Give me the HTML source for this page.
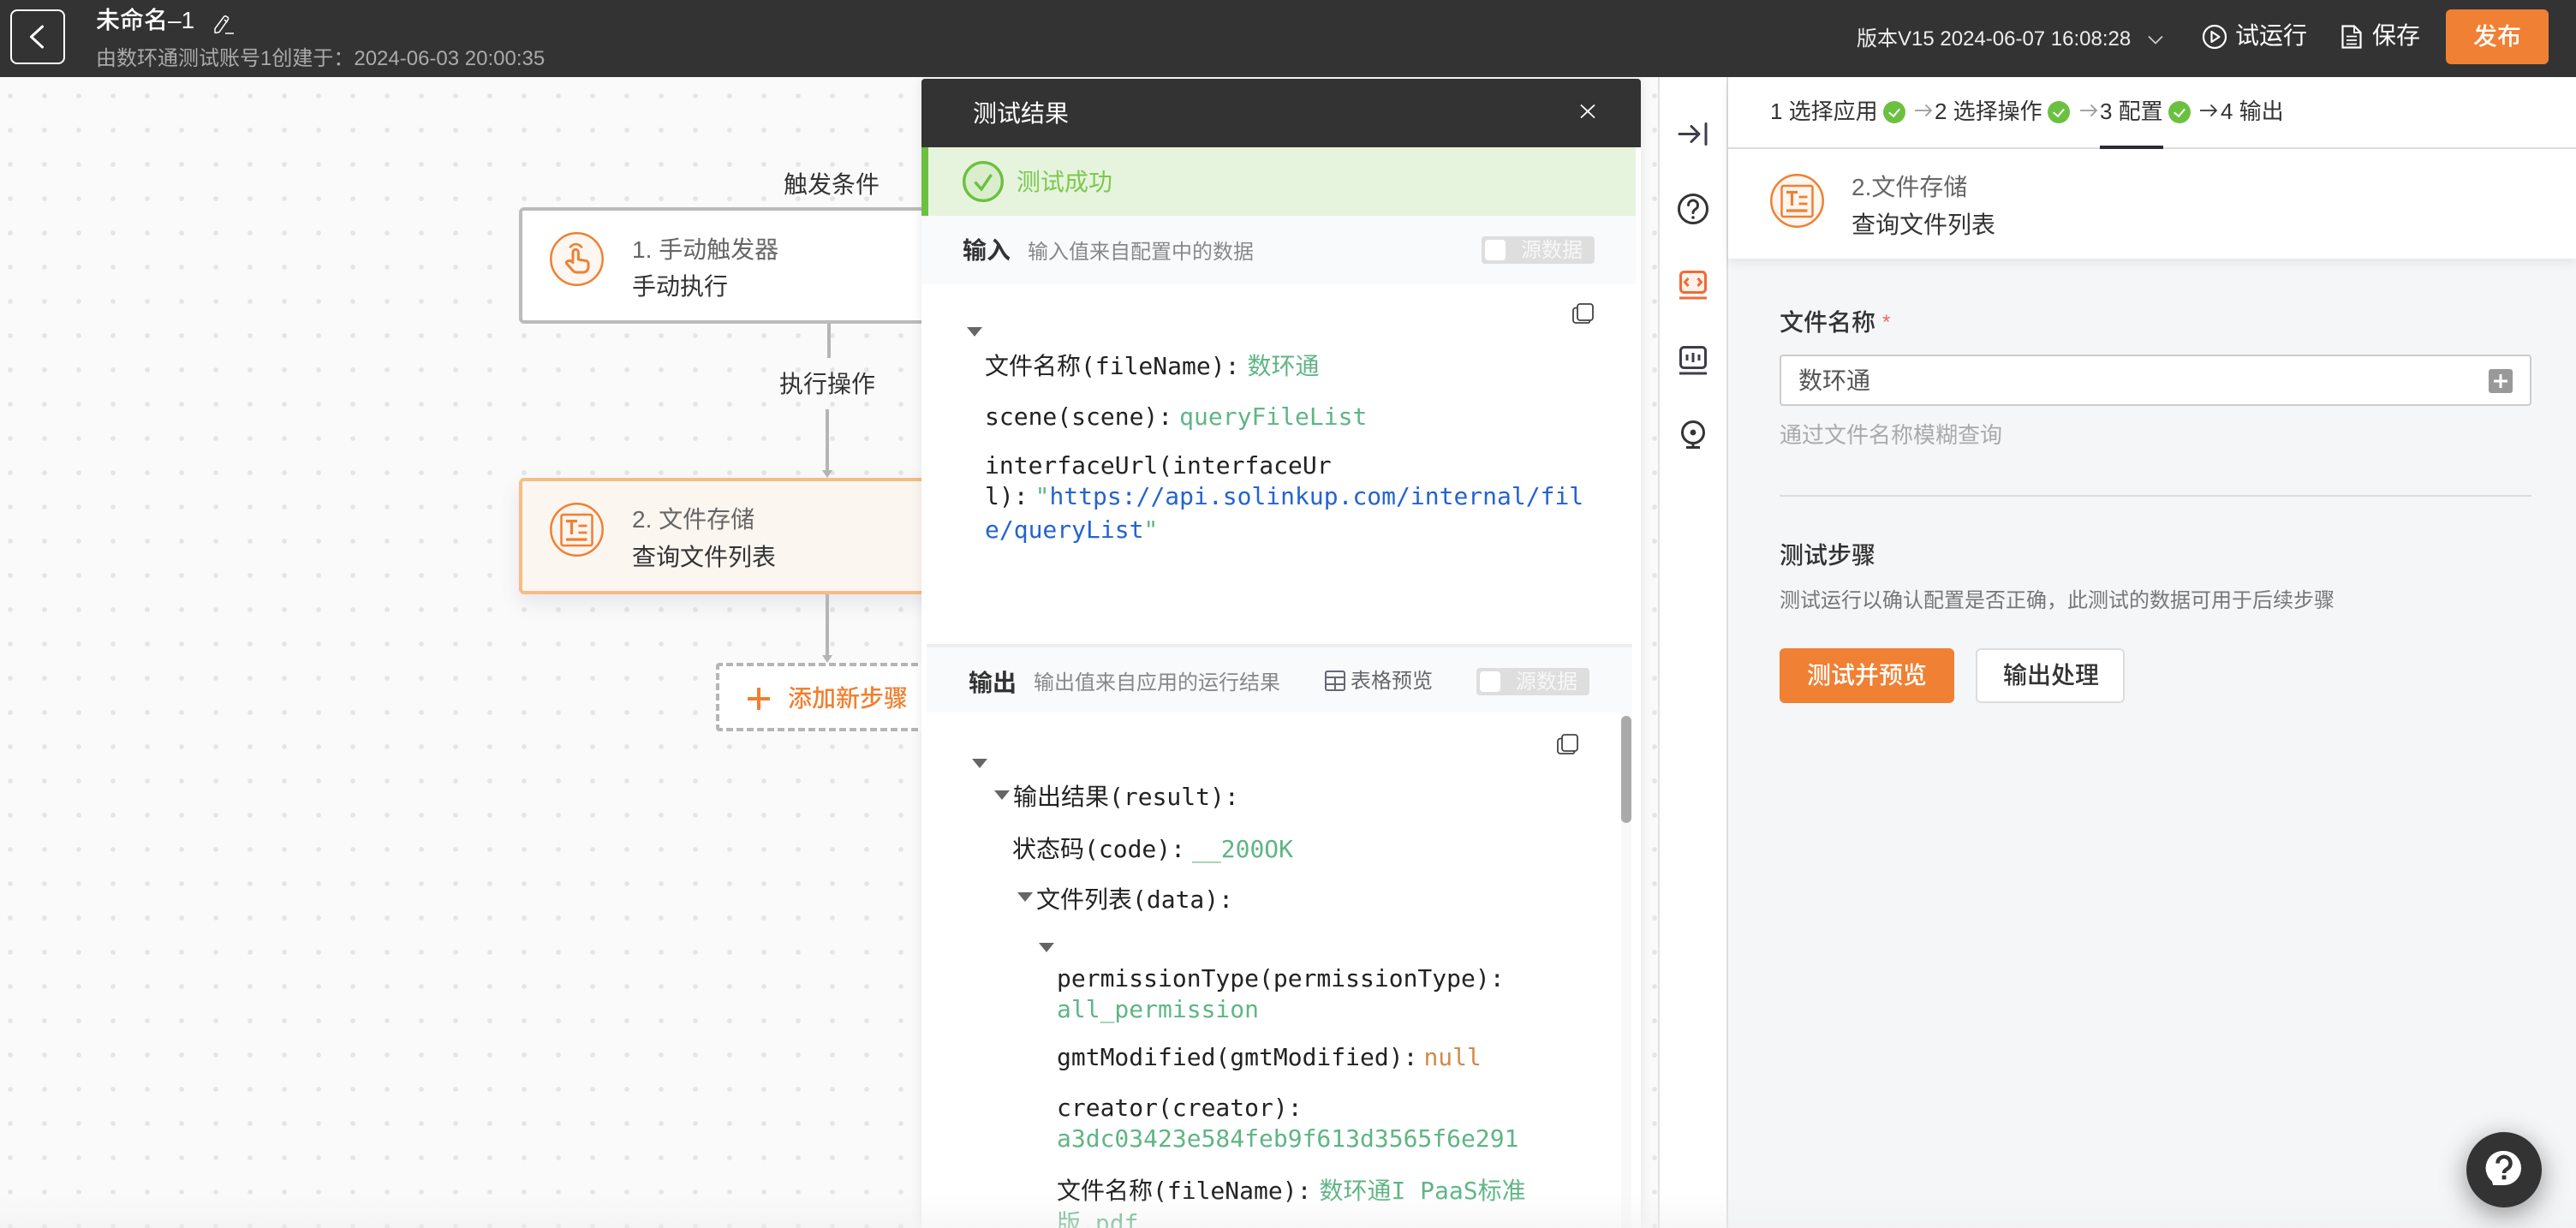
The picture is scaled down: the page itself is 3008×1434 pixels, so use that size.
<!DOCTYPE html>
<html lang="zh-CN">
<head>
<meta charset="utf-8">
<title>未命名-1</title>
<style>
html,body{margin:0;padding:0;width:3008px;height:1434px;overflow:hidden;background:#fafafa}
body{position:relative;font-family:"Liberation Sans","Noto Sans CJK SC",sans-serif;color:#333}
.a{position:absolute}
.t{position:absolute;white-space:pre;line-height:40px;height:40px;font-size:28px}
.m{font-family:"DejaVu Sans Mono","Noto Sans CJK SC",monospace;color:#222}
.g{color:#5fb585}
.b{color:#2463d1}
.o{color:#d08a4c}
svg{position:absolute;overflow:visible}
.canvas{left:0;top:90px;width:3008px;height:1344px;background-color:#fafafa;
background-image:radial-gradient(circle at 12px 22px,#e5e5e5 0,#e5e5e5 2.5px,rgba(229,229,229,0) 3.2px);background-size:40px 40px}
.tri{position:absolute;width:0;height:0;border-left:9px solid transparent;border-right:9px solid transparent;border-top:11px solid #666}
.check{position:absolute;width:26px;height:26px;border-radius:50%;background:#6cc040;top:118px}
.check:after{content:"";position:absolute;left:9px;top:6px;width:6px;height:10px;border:solid #fff;border-width:0 2px 2px 0;transform:rotate(40deg)}
.toggle{position:absolute;width:132px;height:32px;background:#dedede;border-radius:4px}
.toggle i{position:absolute;left:4px;top:4px;width:24px;height:24px;background:#fff;border-radius:4px}
.toggle span{position:absolute;left:46px;top:-3px;line-height:40px;font-size:24px;color:#f7f7f7;white-space:pre}
</style>
</head>
<body>
<div class="a canvas"></div>

<!-- flow -->
<div class="t" style="left:915px;top:196px">触发条件</div>
<div class="a" style="left:606px;top:242px;width:600px;height:136px;box-sizing:border-box;border:4px solid #bbb;border-radius:6px;background:#fff"></div>
<svg style="left:642px;top:271px" width="63" height="63" viewBox="0 0 63 63" fill="none" stroke="#f08030">
<circle cx="31.5" cy="31.5" r="30.2" fill="#fdf6f1" stroke-width="2.5"/>
<path d="M24 17.5a8 8 0 0 1 13 0" stroke-width="2.6" stroke-linecap="round"/>
<path d="M27 33V23.5a3.2 3.2 0 0 1 6.4 0V32l8.6 1.5a3.2 3.2 0 0 1 3 3.2V41a6 6 0 0 1-6 6H31a5 5 0 0 1-3.8-1.8L19.800 37c-1.700-2.200 2.500-6 7.200-1.500" stroke-width="3" stroke-linejoin="round" stroke-linecap="round"/>
</svg>
<div class="t" style="left:738px;top:272px;color:#666">1. 手动触发器</div>
<div class="t" style="left:738px;top:315px">手动执行</div>

<div class="a" style="left:966px;top:378px;width:4px;height:40px;background:#b5b5b5"></div>
<div class="t" style="left:910px;top:429px">执行操作</div>
<div class="a" style="left:964px;top:478px;width:4px;height:76px;background:#b5b5b5"></div>
<div class="a" style="left:960px;top:549px;width:0;height:0;border-left:6px solid transparent;border-right:6px solid transparent;border-top:9px solid #b5b5b5"></div>

<div class="a" style="left:606px;top:558px;width:600px;height:136px;box-sizing:border-box;border:4px solid #f5bd85;border-radius:6px;background:#fcf6f1;box-shadow:0 10px 24px rgba(90,90,120,.12)"></div>
<svg style="left:642px;top:587px" width="63" height="63" viewBox="0 0 63 63" fill="none" stroke="#f08030">
<circle cx="31.5" cy="31.5" r="30.2" stroke-width="2.500"/>
<rect x="13.5" y="14" width="36" height="36" rx="2" stroke-width="2.500"/>
<path d="M19 21.500H32M25.500 21.500V37" stroke-width="3.200"/>
<path d="M33.500 27H43.500M33.500 35H43.500" stroke-width="2.800"/>
<path d="M19 43H43.500" stroke-width="3.200"/>
</svg>
<div class="t" style="left:738px;top:587px;color:#666">2. 文件存储</div>
<div class="t" style="left:738px;top:631px">查询文件列表</div>

<div class="a" style="left:964px;top:694px;width:4px;height:72px;background:#b5b5b5"></div>
<div class="a" style="left:960px;top:765px;width:0;height:0;border-left:6px solid transparent;border-right:6px solid transparent;border-top:9px solid #b5b5b5"></div>
<div class="a" style="left:836px;top:774px;width:260px;height:80px;box-sizing:border-box;border:4px dashed #b5b5b5;border-radius:4px;background:#fff"></div>
<svg style="left:873px;top:803px" width="26" height="26" fill="none" stroke="#f08030" stroke-width="4"><path d="M0 13H26M13 0V26"/></svg>
<div class="t" style="left:920px;top:796px;color:#f08030;font-weight:500">添加新步骤</div>

<!-- test result panel -->
<div class="a" style="left:1076px;top:92px;width:840px;height:1342px;background:#fff;box-shadow:0 0 14px rgba(0,0,0,.09);border-radius:4px 4px 0 0"></div>
<div class="a" style="left:1076px;top:92px;width:840px;height:80px;background:#333;border-radius:4px 4px 0 0"></div>
<div class="t" style="left:1136px;top:113px;color:#fff">测试结果</div>
<svg style="left:1845px;top:122px" width="18" height="16" fill="none" stroke="#fff" stroke-width="1.800"><path d="M1 .5 17 15.500M17 .5 1 15.500"/></svg>

<div class="a" style="left:1076px;top:172px;width:834px;height:80px;background:#e6f4dd"></div>
<div class="a" style="left:1076px;top:172px;width:8px;height:80px;background:#6cc040"></div>
<svg style="left:1124px;top:188px" width="48" height="48" fill="none">
<circle cx="24" cy="24" r="22.300" fill="#daeecd" stroke="#6cc040" stroke-width="3.400"/>
<path d="M14.500 24.500 22 33 33.500 16" stroke="#6cc040" stroke-width="3.400"/>
</svg>
<div class="t" style="left:1187px;top:193px;color:#7cc850">测试成功</div>

<div class="a" style="left:1076px;top:252px;width:834px;height:80px;background:#f9fafc"></div>
<div class="t" style="left:1124px;top:273px;font-weight:700">输入</div>
<div class="t" style="left:1200px;top:275px;font-size:24px;color:#888">输入值来自配置中的数据</div>
<div class="toggle" style="left:1730px;top:276px"><i></i><span>源数据</span></div>

<svg style="left:1836px;top:354px" width="25" height="24" fill="none" stroke="#444" stroke-width="1.800">
<rect x="6" y="1" width="18" height="19" rx="3"/><path d="M5.500 5.500H4a3 3 0 0 0-3 3V20a3 3 0 0 0 3 3h15a3 3 0 0 0 1.500-2.500"/>
</svg>
<div class="tri" style="left:1129px;top:382px"></div>
<div class="t m" style="left:1150px;top:408px">文件名称(fileName):<span class="g" style="margin-left:9px">数环通</span></div>
<div class="t m" style="left:1150px;top:467px">scene(scene):<span class="g" style="margin-left:8px">queryFileList</span></div>
<div class="t m" style="left:1150px;top:524px">interfaceUrl(interfaceUr</div>
<div class="t m" style="left:1150px;top:560px">l):<span class="g" style="margin-left:8px">"</span><span class="b">https://api.solinkup.com/internal/fil</span></div>
<div class="t m" style="left:1150px;top:599px"><span class="b">e/queryList</span><span class="g">"</span></div>

<div class="a" style="left:1082px;top:752px;width:824px;height:4px;background:#eee"></div>
<div class="a" style="left:1082px;top:756px;width:824px;height:76px;background:#f9fafc"></div>
<div class="t" style="left:1131px;top:778px;font-weight:700">输出</div>
<div class="t" style="left:1207px;top:778px;font-size:24px;color:#888">输出值来自应用的运行结果</div>
<svg style="left:1547px;top:783px" width="24" height="24" fill="none" stroke="#667" stroke-width="2"><rect x="1" y="1" width="22" height="22" rx="2"/><path d="M1 8H23M1 16H23M12 8V23"/></svg>
<div class="t" style="left:1577px;top:776px;font-size:24px;color:#666">表格预览</div>
<div class="toggle" style="left:1724px;top:780px"><i></i><span>源数据</span></div>

<div class="a" style="left:1893px;top:832px;width:12px;height:602px;background:#f9f9f9"></div>
<div class="a" style="left:1893px;top:836px;width:12px;height:125px;background:#aaa;border-radius:6px"></div>
<svg style="left:1818px;top:857px" width="25" height="24" fill="none" stroke="#444" stroke-width="1.800">
<rect x="6" y="1" width="18" height="19" rx="3"/><path d="M5.500 5.500H4a3 3 0 0 0-3 3V20a3 3 0 0 0 3 3h15a3 3 0 0 0 1.500-2.500"/>
</svg>
<div class="tri" style="left:1135px;top:886px"></div>
<div class="tri" style="left:1161px;top:923px"></div>
<div class="t m" style="left:1183px;top:911px">输出结果(result):</div>
<div class="t m" style="left:1182px;top:972px">状态码(code):<span class="g" style="margin-left:8px">__200OK</span></div>
<div class="tri" style="left:1188px;top:1042px"></div>
<div class="t m" style="left:1210px;top:1031px">文件列表(data):</div>
<div class="tri" style="left:1213px;top:1101px"></div>
<div class="t m" style="left:1234px;top:1123px">permissionType(permissionType):</div>
<div class="t m g" style="left:1234px;top:1159px;color:#5fb585">all_permission</div>
<div class="t m" style="left:1234px;top:1215px">gmtModified(gmtModified):<span class="o" style="margin-left:7px">null</span></div>
<div class="t m" style="left:1234px;top:1274px">creator(creator):</div>
<div class="t m g" style="left:1234px;top:1310px;color:#5fb585">a3dc03423e584feb9f613d3565f6e291</div>
<div class="t m" style="left:1234px;top:1371px">文件名称(fileName):<span class="g" style="margin-left:9px">数环通I PaaS标准</span></div>
<div class="t m g" style="left:1234px;top:1409px;color:#5fb585">版.pdf</div>

<!-- sidebar -->
<div class="a" style="left:1936px;top:90px;width:82px;height:1344px;background:#fff;border-left:2px solid #e2e2e2;border-right:2px solid #ddd;box-sizing:border-box"></div>
<svg style="left:1960px;top:143px" width="34" height="27" fill="none" stroke="#3d3d4d" stroke-width="3" stroke-linecap="round" stroke-linejoin="round"><path d="M1 13.500H23M15 4.500 24 13.500 15 22.500"/><path d="M32 1.500V25.500" /></svg>
<svg style="left:1959px;top:226px" width="36" height="36" fill="none" stroke="#333" stroke-width="3"><circle cx="18" cy="18" r="16.500"/><path d="M12.500 13.500a5.500 5.500 0 1 1 8.500 4.600c-2 1.300-3 2.300-3 4.400" stroke-linecap="round"/><circle cx="18" cy="28" r="1.800" fill="#333" stroke="none"/></svg>
<svg style="left:1961px;top:316px" width="32" height="34" fill="none" stroke="#f06a35" stroke-width="3"><rect x="1.500" y="1.500" width="29" height="24" rx="4" fill="#fdf1ea"/><path d="M10.500 9 6.500 13.500 10.500 18M21.500 9 25.500 13.500 21.500 18" stroke-width="3"/><path d="M0 32H32"/></svg>
<svg style="left:1961px;top:404px" width="32" height="34" fill="none" stroke="#3d3d4d" stroke-width="3"><rect x="1.500" y="1.500" width="29" height="24" rx="4"/><path d="M9 10V17M16 8V19M23 10V17"/><path d="M0 32H32"/></svg>
<svg style="left:1963px;top:491px" width="28" height="33" fill="none" stroke="#333" stroke-width="3"><circle cx="14" cy="14" r="12.500"/><circle cx="14" cy="14" r="3.400" fill="#333" stroke="none"/><path d="M14 26V31M6 31.500H22"/></svg>

<!-- right panel -->
<div class="a" style="left:2018px;top:90px;width:990px;height:1344px;background:#f5f6f8"></div>
<div class="a" style="left:2018px;top:90px;width:990px;height:212px;background:#fff;box-shadow:0 5px 12px rgba(0,0,0,.07)"></div>
<div class="a" style="left:2018px;top:172px;width:990px;height:2px;background:#ddd"></div>
<div class="a" style="left:2452px;top:170px;width:74px;height:4px;background:#2a2a3a"></div>
<div class="t" style="left:2067px;top:110px;font-size:26px">1 选择应用</div>
<div class="check" style="left:2199px"></div>
<svg style="left:2236px;top:122px" width="20" height="14" fill="none" stroke="#999" stroke-width="1.700"><path d="M0 7H19M12.500 .5 19 7 12.500 13.500"/></svg>
<div class="t" style="left:2259px;top:110px;font-size:26px">2 选择操作</div>
<div class="check" style="left:2391px"></div>
<svg style="left:2429px;top:122px" width="20" height="14" fill="none" stroke="#999" stroke-width="1.700"><path d="M0 7H19M12.500 .5 19 7 12.500 13.500"/></svg>
<div class="t" style="left:2452px;top:110px;font-size:26px">3 配置</div>
<div class="check" style="left:2532px"></div>
<svg style="left:2569px;top:122px" width="20" height="14" fill="none" stroke="#333" stroke-width="1.700"><path d="M0 7H19M12.500 .5 19 7 12.500 13.500"/></svg>
<div class="t" style="left:2593px;top:110px;font-size:26px">4 输出</div>

<svg style="left:2067px;top:203px" width="63" height="63" viewBox="0 0 63 63" fill="none" stroke="#f08030">
<circle cx="31.500" cy="31.500" r="30.200" fill="#fdf6f1" stroke-width="2.500"/>
<rect x="13.500" y="14" width="36" height="36" rx="2" stroke-width="2.500"/>
<path d="M19 21.500H32M25.500 21.500V37" stroke-width="3.200"/>
<path d="M33.500 27H43.500M33.500 35H43.500" stroke-width="2.800"/>
<path d="M19 43H43.500" stroke-width="3.200"/>
</svg>
<div class="t" style="left:2162px;top:199px;color:#666">2.文件存储</div>
<div class="t" style="left:2162px;top:243px">查询文件列表</div>

<div class="t" style="left:2078px;top:357px;font-weight:500">文件名称</div>
<div class="t" style="left:2198px;top:357px;font-size:24px;color:#e66">*</div>
<div class="a" style="left:2078px;top:414px;width:878px;height:60px;box-sizing:border-box;background:#fff;border:2px solid #ccc;border-radius:4px"></div>
<div class="t" style="left:2100px;top:425px;color:#555">数环通</div>
<div class="a" style="left:2906px;top:431px;width:28px;height:28px;background:#999;border-radius:3px"></div>
<svg style="left:2906px;top:431px" width="28" height="28" fill="none" stroke="#fff" stroke-width="3"><path d="M6 14H22M14 6V22"/></svg>
<div class="t" style="left:2078px;top:488px;font-size:26px;color:#aaa">通过文件名称模糊查询</div>
<div class="a" style="left:2078px;top:578px;width:878px;height:2px;background:#ddd"></div>
<div class="t" style="left:2078px;top:629px;font-weight:500">测试步骤</div>
<div class="t" style="left:2078px;top:682px;font-size:24px;color:#777">测试运行以确认配置是否正确，此测试的数据可用于后续步骤</div>
<div class="a" style="left:2078px;top:757px;width:204px;height:64px;background:#f08033;border-radius:6px"></div>
<div class="t" style="left:2110px;top:769px;color:#fff;font-weight:500">测试并预览</div>
<div class="a" style="left:2307px;top:757px;width:174px;height:64px;box-sizing:border-box;background:#fff;border:2px solid #ddd;border-radius:6px"></div>
<div class="t" style="left:2339px;top:769px;font-weight:500">输出处理</div>

<!-- page bottom fade -->
<div class="a" style="left:0;top:1394px;width:3008px;height:40px;background:linear-gradient(rgba(238,238,238,0),rgba(238,238,238,.45))"></div>

<!-- help -->
<div class="a" style="left:2880px;top:1322px;width:88px;height:88px;border-radius:50%;background:#333;box-shadow:0 8px 32px rgba(0,0,0,.42)"></div>
<svg style="left:2904px;top:1344px" width="40" height="42" fill="none">
<path d="M20 0a20 20 0 0 1 0 40H7l-1-4.500A20 20 0 0 1 20 0Z" fill="#fff"/>
<path d="M12.500 14.500a7.500 7.500 0 1 1 11.500 6.200c-2.500 1.700-4 2.800-4 5.300" stroke="#333" stroke-width="4.500"/>
<rect x="17.600" y="28.500" width="4.800" height="4.800" fill="#333"/>
</svg>

<!-- header -->
<div class="a" style="left:0;top:0;width:3008px;height:90px;background:#333"></div>
<div class="a" style="left:12px;top:11px;width:64px;height:64px;box-sizing:border-box;border:2px solid #fff;border-radius:8px"></div>
<svg style="left:34px;top:29px" width="18" height="28" fill="none" stroke="#fff" stroke-width="3" stroke-linecap="round" stroke-linejoin="round"><path d="M15.500 2 2.500 14 15.500 26"/></svg>
<div class="t" style="left:112px;top:4px;color:#fff;font-weight:500">未命名–1</div>
<svg style="left:250px;top:18px" width="23" height="23" fill="none" stroke="#fff" stroke-width="1.500"><path d="M1 20V15.500L11.500 1.500a2 2 0 0 1 2.800-.4l1.500 1a2 2 0 0 1 .4 2.800L6 19.500 2 20.500ZM12 5 15.500 8M13 21H23"/></svg>
<div class="t" style="left:112px;top:49px;font-size:24px;color:#aaa">由数环通测试账号1创建于：2024-06-03 20:00:35</div>
<div class="t" style="left:2168px;top:26px;font-size:24px;color:#eee">版本V15 2024-06-07 16:08:28</div>
<svg style="left:2508px;top:42px" width="18" height="9" fill="none" stroke="#ccc" stroke-width="1.800"><path d="M1 .5 9 8.500 17 .5"/></svg>
<svg style="left:2572px;top:29px" width="28" height="28" fill="none" stroke="#fff" stroke-width="2.200"><circle cx="14" cy="14" r="13"/><path d="M10.500 8V20L19.500 14Z" stroke-linejoin="round"/></svg>
<div class="t" style="left:2610px;top:22px;color:#fff">试运行</div>
<svg style="left:2734px;top:29px" width="24" height="28" fill="none" stroke="#fff" stroke-width="2.200"><path d="M1.500 1.500H15L22.500 9V26.500H1.500Z"/><path d="M15 1.500V9H22.500M6 13.500H18M6 18H18M6 22.500H18" stroke-width="1.800"/></svg>
<div class="t" style="left:2770px;top:22px;color:#fff">保存</div>
<div class="a" style="left:2856px;top:11px;width:120px;height:64px;background:#f08033;border-radius:6px"></div>
<div class="t" style="left:2888px;top:23px;color:#fff;font-weight:500">发布</div>
</body>
</html>
